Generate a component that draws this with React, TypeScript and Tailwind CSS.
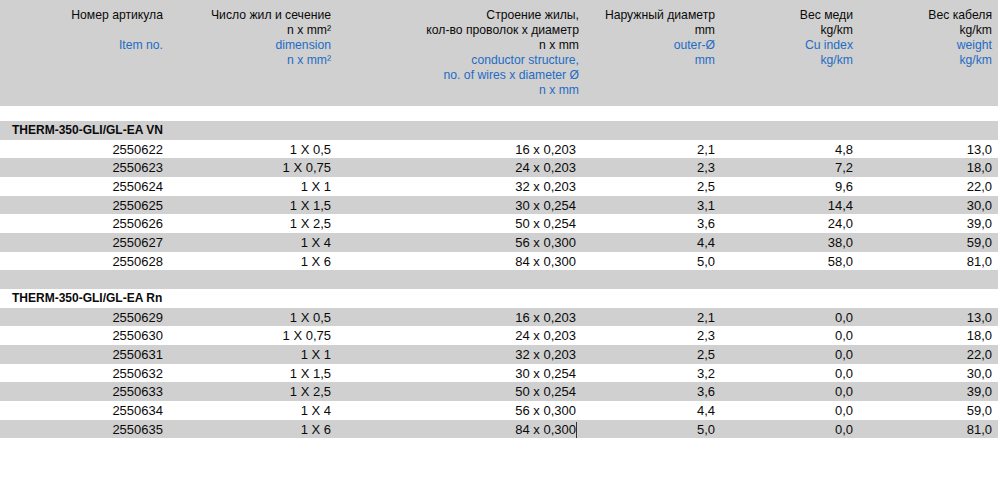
import React from "react";

const BLUE = "text-[#1f6cc3]";

type Row = [string, string, string, string, string, string];

const groupA: Row[] = [
  ["2550622", "1 X 0,5", "16 x 0,203", "2,1", "4,8", "13,0"],
  ["2550623", "1 X 0,75", "24 x 0,203", "2,3", "7,2", "18,0"],
  ["2550624", "1 X 1", "32 x 0,203", "2,5", "9,6", "22,0"],
  ["2550625", "1 X 1,5", "30 x 0,254", "3,1", "14,4", "30,0"],
  ["2550626", "1 X 2,5", "50 x 0,254", "3,6", "24,0", "39,0"],
  ["2550627", "1 X 4", "56 x 0,300", "4,4", "38,0", "59,0"],
  ["2550628", "1 X 6", "84 x 0,300", "5,0", "58,0", "81,0"],
];

const groupB: Row[] = [
  ["2550629", "1 X 0,5", "16 x 0,203", "2,1", "0,0", "13,0"],
  ["2550630", "1 X 0,75", "24 x 0,203", "2,3", "0,0", "18,0"],
  ["2550631", "1 X 1", "32 x 0,203", "2,5", "0,0", "22,0"],
  ["2550632", "1 X 1,5", "30 x 0,254", "3,2", "0,0", "30,0"],
  ["2550633", "1 X 2,5", "50 x 0,254", "3,6", "0,0", "39,0"],
  ["2550634", "1 X 4", "56 x 0,300", "4,4", "0,0", "59,0"],
  ["2550635", "1 X 6", "84 x 0,300", "5,0", "0,0", "81,0"],
];

const GRID = "grid grid-cols-[167px_168px_248px_136px_138px_141px]";

function HeaderCell({ black, blue, last }: { black: string[]; blue: string[]; last?: boolean }) {
  return (
    <div className={`flex flex-col items-end text-right ${last ? "pr-[6px]" : "pr-[4px]"}`}>
      {black.map((t, i) => (
        <div key={"k" + i} className="h-[15px] leading-[15px] whitespace-nowrap">
          {t}
        </div>
      ))}
      {blue.map((t, i) => (
        <div key={"b" + i} className={`h-[15px] leading-[15px] whitespace-nowrap ${BLUE}`}>
          {t}
        </div>
      ))}
    </div>
  );
}

function DataRow({ row, gray, caret }: { row: Row; gray: boolean; caret?: boolean }) {
  const pads = ["pr-[4px]", "pr-[4px]", "pr-[7px]", "pr-[4px]", "pr-[4px]", "pr-[6px]"];
  return (
    <div className={`${GRID} h-[18.67px] ${gray ? "bg-[#d0d0d0]" : "bg-white"}`}>
      {row.map((c, i) => (
        <div key={i} className={`relative flex items-center justify-end whitespace-nowrap ${pads[i]}`}>
          {c}
          {caret && i === 2 ? (
            <span className="absolute right-[6px] top-[2px] w-px h-[16px] bg-[#333]" />
          ) : null}
        </div>
      ))}
    </div>
  );
}

function TitleRow({ title, gray }: { title: string; gray: boolean }) {
  return (
    <div
      className={`flex items-center h-[18.67px] pl-[12px] font-bold text-[12px] ${gray ? "bg-[#d0d0d0]" : "bg-white"}`}
    >
      {title}
    </div>
  );
}

export default function App() {
  return (
    <div
      className="w-[1000px] h-[501px] bg-white text-[13px] text-[#0a0a0a] overflow-hidden"
      style={{ fontFamily: '"Liberation Sans", Arial, sans-serif' }}
    >
      <div className="w-[998px]">
        <div className={`${GRID} h-[106px] bg-[#d0d0d0] pt-[8px] text-[12.2px]`}>
          <HeaderCell black={["Номер артикула", ""]} blue={["Item no."]} />
          <HeaderCell black={["Число жил и сечение", "n x mm²"]} blue={["dimension", "n x mm²"]} />
          <HeaderCell
            black={["Строение жилы,", "кол-во проволок x диаметр", "n x mm"]}
            blue={["conductor structure,", "no. of wires x diameter Ø", "n x mm"]}
          />
          <HeaderCell black={["Наружный диаметр", "mm"]} blue={["outer-Ø", "mm"]} />
          <HeaderCell black={["Вес меди", "kg/km"]} blue={["Cu index", "kg/km"]} />
          <HeaderCell black={["Вес кабеля", "kg/km"]} blue={["weight", "kg/km"]} last />
        </div>
        <div className="h-[15px] bg-white" />
        <TitleRow title="THERM-350-GLI/GL-EA VN" gray />
        {groupA.map((r, i) => (
          <DataRow key={r[0]} row={r} gray={i % 2 === 1} />
        ))}
        <div className="h-[18.67px] bg-[#d0d0d0]" />
        <TitleRow title="THERM-350-GLI/GL-EA Rn" gray={false} />
        {groupB.map((r, i) => (
          <DataRow key={r[0]} row={r} gray={i % 2 === 0} caret={i === groupB.length - 1} />
        ))}
      </div>
    </div>
  );
}
